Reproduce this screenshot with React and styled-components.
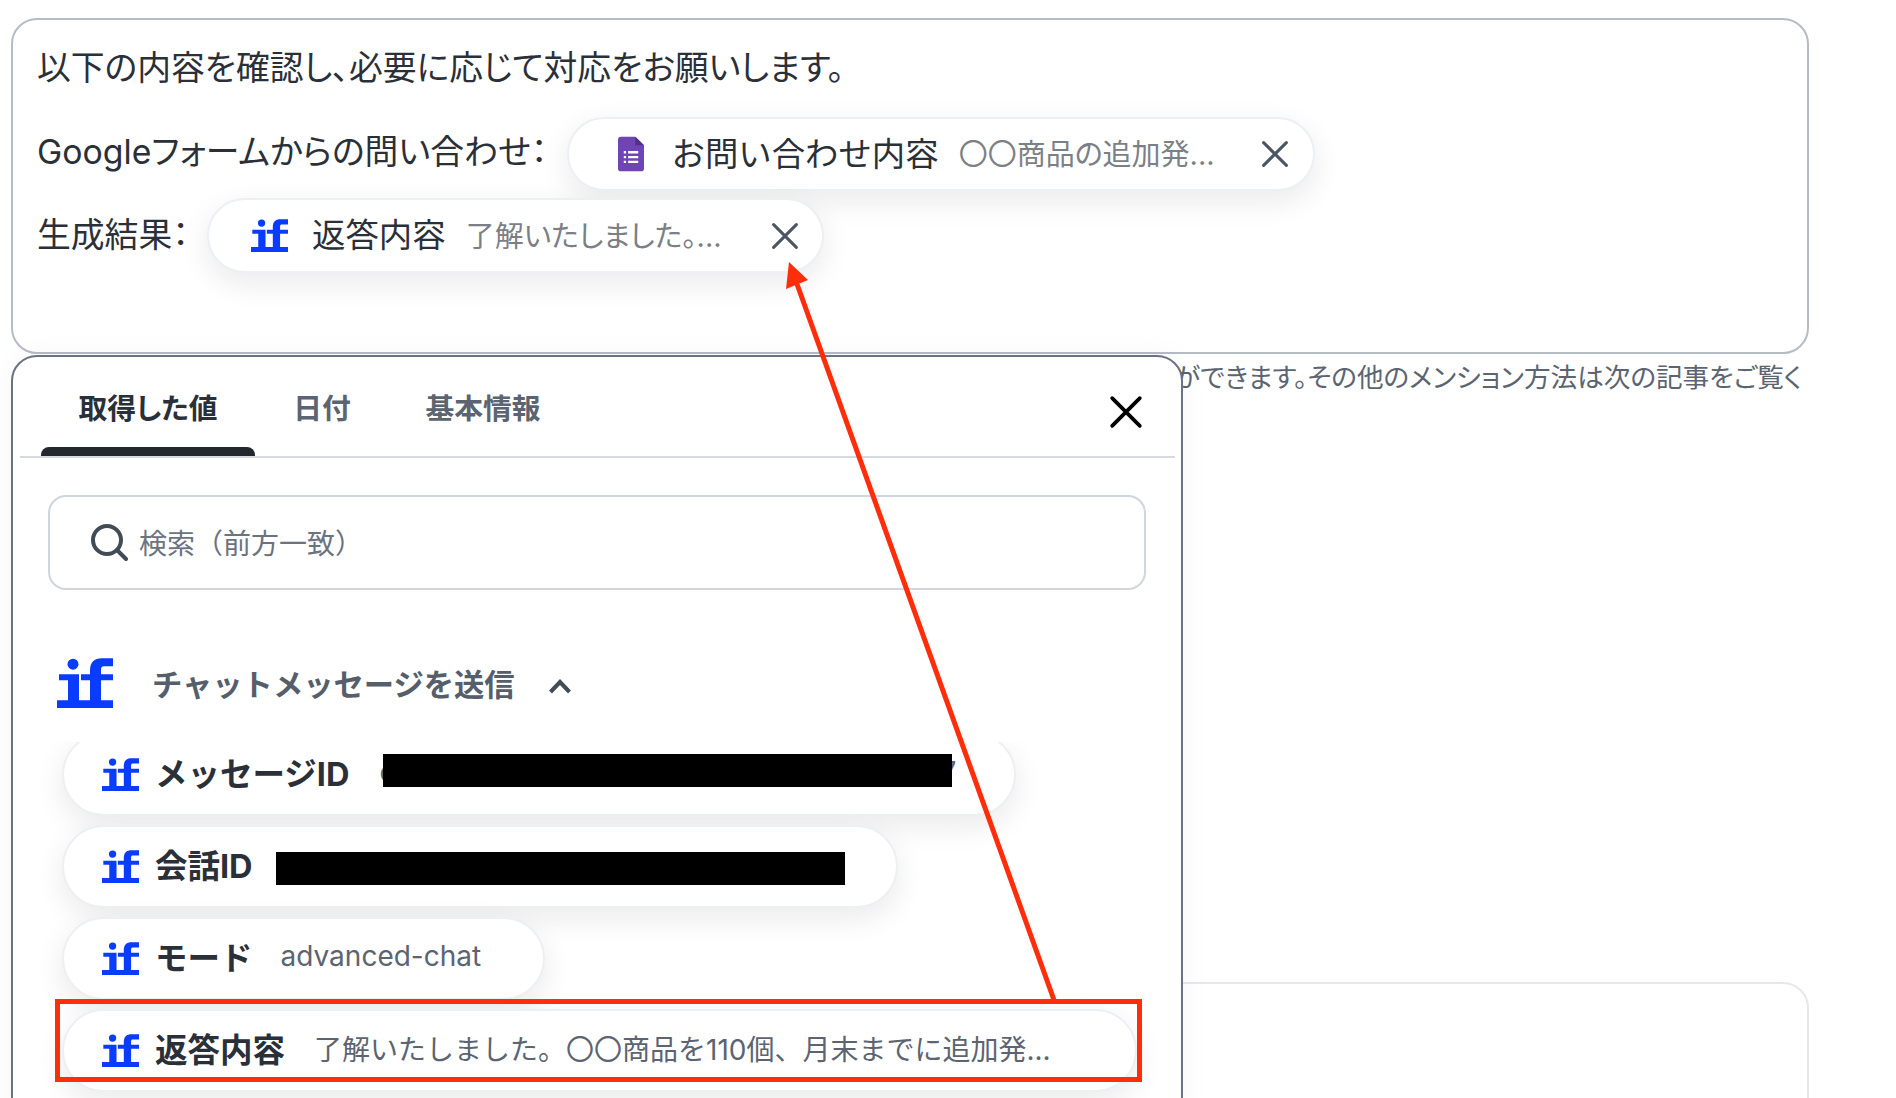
import React from "react";
import styled, { createGlobalStyle } from "styled-components";

const GlobalStyle = createGlobalStyle`
  html, body {
    margin: 0;
    padding: 0;
    background: #fff;
    overflow: hidden;
  }
  * {
    box-sizing: border-box;
  }
`;

const IfLogo = ({ size }) => (
  <svg width={size} height={size * 0.9} viewBox="0 0 56 50" style={{ flex: "none" }}>
    <circle cx="16" cy="6" r="5.500" fill="#0a3cff" />
    <path
      d="M2 16h20v26h11V22h-9v-6h9v-4C33 4 37 0 45 0h11v8H47c-2 0-3 1-3 3v5h12v6H44v20h12v8H0v-8h11V22H2z"
      fill="#0a3cff"
    />
  </svg>
);

const FormsIcon = () => (
  <svg width="26" height="36" viewBox="0 0 27 36" style={{ flex: "none" }}>
    <path d="M3 0h15l9 9v24a3 3 0 0 1-3 3H3a3 3 0 0 1-3-3V3a3 3 0 0 1 3-3z" fill="#6f45b5" />
    <path d="M18 0l9 9h-9z" fill="#4f2f8f" />
    <path d="M6 15h2.400v2.400H6zM6 20h2.400v2.400H6zM6 25h2.400v2.400H6zM10.500 15H21v2.400H10.500zM10.500 20H21v2.400H10.500zM10.500 25H21v2.400H10.500z" fill="#fff" />
  </svg>
);

const CloseIcon = ({ size, color, weight }) => (
  <svg width={size} height={size} viewBox="0 0 32 32" style={{ flex: "none" }}>
    <path d="M3 3l26 26M29 3L3 29" stroke={color} strokeWidth={weight} strokeLinecap="round" fill="none" />
  </svg>
);

const SearchIcon = () => (
  <svg width="38" height="38" viewBox="0 0 38 38" style={{ flex: "none" }}>
    <circle cx="17" cy="17" r="14" stroke="#434b57" strokeWidth="4" fill="none" />
    <path d="M27 27l9 9" stroke="#434b57" strokeWidth="4" strokeLinecap="round" />
  </svg>
);

const ChevronUp = () => (
  <svg width="24" height="15" viewBox="0 0 24 15" style={{ flex: "none", marginTop: 6 }}>
    <path d="M2.500 13L12 3l9.500 10" stroke="#434b57" strokeWidth="4" fill="none" />
  </svg>
);

const Page = styled.div`
  position: relative;
  width: 1896px;
  height: 1098px;
  overflow: hidden;
  padding: 18px 87px 0 11px;
  font-family: Inter, "Noto Sans CJK JP", sans-serif;
  font-feature-settings: "palt";
  color: #2b3038;
`;

const Editor = styled.div`
  height: 336px;
  padding: 26px 24px 0;
  border: 2px solid #b5bcc6;
  border-radius: 26px;
  display: flex;
  flex-direction: column;
  align-items: flex-start;
`;

const Sentence = styled.div`
  font-size: 33.800px;
  line-height: 44px;
  margin-bottom: 27px;
`;

const Line = styled.div`
  display: flex;
  align-items: center;
  gap: ${(p) => p.$gap}px;
  font-size: 33.800px;
  margin-bottom: 7px;
`;

const LineLabel = styled.span`
  margin-top: ${(p) => p.$lift}px;
  white-space: nowrap;
`;

const Chip = styled.div`
  display: inline-flex;
  align-items: center;
  flex: none;
  width: ${(p) => p.$width}px;
  height: ${(p) => p.$height}px;
  padding-left: ${(p) => p.$pad}px;
  padding-right: ${(p) => p.$padRight || 0}px;
  background: #fff;
  border: 2px solid #eceff4;
  border-radius: 40px;
  box-shadow: 0 10px 30px rgba(20, 24, 40, 0.09);
`;

const ChipLabel = styled.span`
  font-size: ${(p) => (p.$bold ? 32.5 : 33.4)}px;
  font-weight: ${(p) => (p.$bold ? 700 : 400)};
  font-feature-settings: normal;
  margin-left: ${(p) => p.$left}px;
  margin-bottom: 6px;
  color: #2b3038;
  white-space: nowrap;
`;

const ChipValue = styled.span`
  font-size: 29px;
  margin-left: ${(p) => p.$left}px;
  margin-bottom: 4px;
  color: #7b7f86;
  white-space: nowrap;
  flex: 1;
`;

const ListValue = styled.span`
  font-size: 28px;
  font-feature-settings: normal;
  margin-left: ${(p) => p.$left}px;
  margin-bottom: 5px;
  color: #5b6470;
  white-space: nowrap;
`;

const Hint = styled.div`
  height: 42px;
  padding-right: 7px;
  display: flex;
  align-items: center;
  justify-content: flex-end;
  font-size: 26.600px;
  color: #5b6470;
  white-space: nowrap;
`;

const LowerCard = styled.div`
  height: 300px;
  margin-top: 586px;
  border: 2px solid #e6e8ec;
  border-radius: 26px;
`;

const Popup = styled.div`
  position: absolute;
  left: 11px;
  top: 355px;
  width: 1172px;
  height: 770px;
  padding: 0 6px 0 7px;
  background: #fff;
  border: 2px solid #6b7280;
  border-radius: 26px;
  box-shadow: 0 0 30px rgba(20, 24, 40, 0.04);
`;

const TabBar = styled.div`
  height: 101px;
  display: flex;
  align-items: stretch;
  padding: 0 0 0 21px;
  border-bottom: 2px solid #d6dae0;
`;

const Tab = styled.div`
  width: ${(p) => p.$width}px;
  position: relative;
  display: flex;
  justify-content: center;
  padding-top: 32px;
  font-size: 28.800px;
  line-height: 40px;
  font-weight: 700;
  color: ${(p) => (p.$active ? "#2b3038" : "#5b6470")};

  ${(p) =>
    p.$active &&
    `&::after {
      content: "";
      position: absolute;
      left: 0;
      right: 0;
      bottom: 0;
      height: 9px;
      background: #23272e;
      border-radius: 8px 8px 0 0;
    }`}
`;

const CloseButton = styled.div`
  margin-left: auto;
  margin-right: 32px;
  padding-top: 38px;
`;

const SearchBox = styled.div`
  height: 95px;
  margin: 37px 29px 0 28px;
  padding: 0 0 2px 40px;
  display: flex;
  align-items: center;
  gap: 11px;
  border: 2px solid #d1d6dc;
  border-radius: 18px;
  font-size: 28px;
  font-feature-settings: normal;
  color: #6b7280;
`;

const GroupHead = styled.div`
  height: 60px;
  margin-top: 63px;
  padding-left: 37px;
  display: flex;
  align-items: center;
  font-size: 30.300px;
  font-weight: 600;
  font-feature-settings: normal;
  color: #555e6b;
`;

const GroupTitle = styled.span`
  margin: 0 33px 0 39px;
`;

const ChipList = styled.div`
  margin: 29px -6px 0 -2px;
  height: 400px;
  overflow: hidden;
  padding: 0 0 0 44px;
  display: flex;
  flex-direction: column;
  align-items: flex-start;
  gap: 9px;
`;

const ListChip = styled(Chip)`
  border-radius: 44px;
  &:first-child {
    margin-top: -9px;
  }
`;

const Redacted = styled.div`
  position: relative;
  z-index: 1;
  width: 569px;
  height: 33px;
  margin-left: ${(p) => p.$left}px;
  margin-right: ${(p) => p.$right || 0}px;
  margin-top: ${(p) => p.$shift}px;
  background: #000;
  flex: none;
`;

const RedBox = styled.div`
  position: absolute;
  left: 55px;
  top: 999px;
  width: 1087px;
  height: 83px;
  border: 5px solid #ff2d0a;
`;

const ArrowLayer = styled.svg`
  position: absolute;
  left: 0;
  top: 0;
  pointer-events: none;
`;

const App = () => {
  return (
    <Page>
      <GlobalStyle />
      <Editor>
        <Sentence>以下の内容を確認し、必要に応じて対応をお願いします。</Sentence>
        <Line $gap={19}>
          <LineLabel $lift={-9}>Googleフォームからの問い合わせ：</LineLabel>
          <Chip $width={748} $height={74} $pad={49} $padRight={24}>
            <FormsIcon />
            <ChipLabel $left={28}>お問い合わせ内容</ChipLabel>
            <ChipValue $left={20}>〇〇商品の追加発...</ChipValue>
            <CloseIcon size={28} color="#4b5563" weight={3.5} />
          </Chip>
        </Line>
        <Line $gap={18}>
          <LineLabel $lift={-6}>生成結果：</LineLabel>
          <Chip $width={617} $height={75} $pad={42} $padRight={23}>
            <IfLogo size={37} />
            <ChipLabel $left={24}>返答内容</ChipLabel>
            <ChipValue $left={20}>了解いたしました。...</ChipValue>
            <CloseIcon size={28} color="#4b5563" weight={3.5} />
          </Chip>
        </Line>
      </Editor>
      <Hint>ができます。その他のメンション方法は次の記事をご覧く</Hint>
      <LowerCard />
      <Popup>
        <TabBar>
          <Tab $width={214} $active>取得した値</Tab>
          <Tab $width={134}>日付</Tab>
          <Tab $width={188}>基本情報</Tab>
          <CloseButton>
            <CloseIcon size={34} color="#000" weight={3.5} />
          </CloseButton>
        </TabBar>
        <SearchBox>
          <SearchIcon />
          検索（前方一致）
        </SearchBox>
        <GroupHead>
          <IfLogo size={56} />
          <GroupTitle>チャットメッセージを送信</GroupTitle>
          <ChevronUp />
        </GroupHead>
        <ChipList>
          <ListChip $width={954} $height={83} $pad={38}>
            <IfLogo size={37} />
            <ChipLabel $left={16} $bold>メッセージID</ChipLabel>
            <ListValue $left={30}>c</ListValue>
            <Redacted $left={-12} $right={-12} $shift={-9} />
            <ListValue $left={0}>7</ListValue>
          </ListChip>
          <ListChip $width={836} $height={83} $pad={38}>
            <IfLogo size={37} />
            <ChipLabel $left={16} $bold>会話ID</ChipLabel>
            <Redacted $left={23} $shift={4} />
          </ListChip>
          <ListChip $width={483} $height={83} $pad={38}>
            <IfLogo size={37} />
            <ChipLabel $left={16} $bold>モード</ChipLabel>
            <ListValue $left={28}>advanced-chat</ListValue>
          </ListChip>
          <ListChip $width={1075} $height={83} $pad={38}>
            <IfLogo size={37} />
            <ChipLabel $left={16} $bold>返答内容</ChipLabel>
            <ListValue $left={29}>了解いたしました。〇〇商品を110個、月末までに追加発...</ListValue>
          </ListChip>
        </ChipList>
      </Popup>
      <RedBox />
      <ArrowLayer width="1896" height="1098" viewBox="0 0 1896 1098">
        <path d="M1054 1000L797 284" stroke="#ff2d0a" strokeWidth="5" fill="none" />
        <path d="M789 262L808 280L786 289z" fill="#ff2d0a" />
      </ArrowLayer>
    </Page>
  );
};

export default App;
